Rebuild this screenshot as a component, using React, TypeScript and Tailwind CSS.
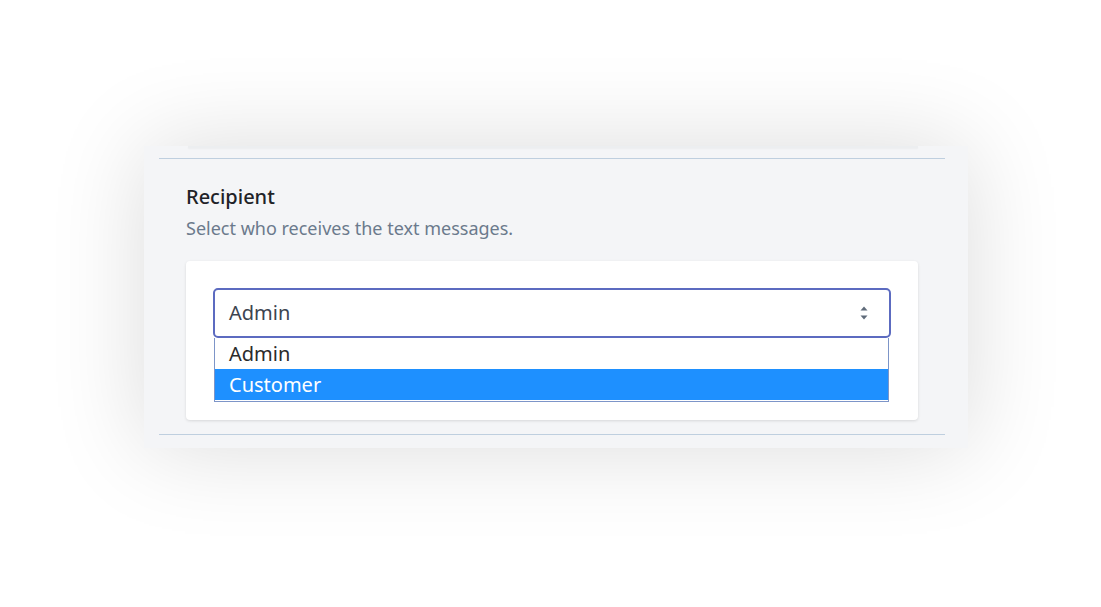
import React from 'react';

const options = ['Admin', 'Customer'];

const SortArrows: React.FC = () => (
  <svg width="8" height="14" viewBox="0 0 8 14" className="text-[#5f6b7a]">
    <path d="M4 0.5 L7.5 4.5 L0.5 4.5 Z" fill="currentColor" />
    <path d="M4 13.5 L7.5 9.5 L0.5 9.5 Z" fill="currentColor" />
  </svg>
);

const App: React.FC = () => {
  const selected = 'Admin';
  const highlighted = 'Customer';

  return (
    <div
      className="min-h-screen bg-white pt-[146px] pl-[144px]"
      style={{ fontFamily: '"Noto Sans", "Open Sans", sans-serif' }}
    >
      <div className="w-[824px] h-[302px] bg-[#f4f5f7] shadow-[0_0_90px_rgba(0,0,0,0.14)] flex flex-col">
        {/* bottom edge of the card above, cut off */}
        <div className="ml-[44px] w-[730px] h-[2px] bg-[#eceef0] shadow-[0_1px_2px_rgba(0,0,0,0.04)]" />
        <div className="mt-[10px] ml-[15px] w-[786px] h-px bg-[#bfcfdf]" />

        <div className="pl-[42px] pt-[24px]">
          <h2 className="text-[20px] leading-[28px] font-medium text-[#1f2328]">Recipient</h2>
          <p className="mt-[5px] text-[18px] leading-[24px] text-[#6b7a8c]">
            Select who receives the text messages.
          </p>

          {/* Select card */}
          <div className="mt-[21px] w-[732px] h-[159px] bg-white rounded-[4px] shadow-[0_1px_3px_rgba(0,0,0,0.12)] px-[27px] pt-[27px]">
            <div className="h-[50px] border-2 border-[#5c6bc0] rounded-[5px] flex items-center justify-between pl-[14px] pr-[21px]">
              <span className="text-[20px] text-[#3d4450]">{selected}</span>
              <SortArrows />
            </div>
            <div className="ml-px w-[675px] border border-t-0 border-[#7d95c8] pb-px">
              {options.map((opt) => (
                <div
                  key={opt}
                  className={`h-[31px] flex items-center pl-[14px] text-[20px] ${
                    opt === highlighted ? 'bg-[#1e90ff] text-white' : 'text-[#2b2b2b]'
                  }`}
                >
                  {opt}
                </div>
              ))}
            </div>
          </div>
        </div>

        <div className="mt-[14px] ml-[15px] w-[786px] h-px bg-[#bfcfdf]" />
      </div>
    </div>
  );
};

export default App;
